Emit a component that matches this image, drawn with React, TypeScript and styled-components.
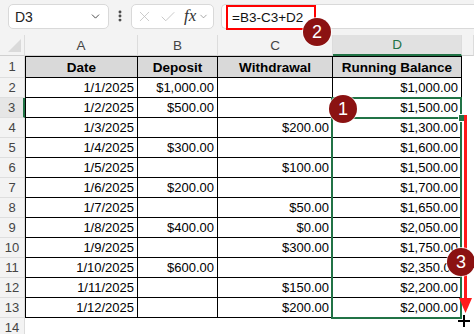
import { Fragment } from 'react';
import styled, { createGlobalStyle } from 'styled-components';
import { ChevronDown, X, Check, EllipsisVertical } from 'lucide-react';

const GlobalStyle = createGlobalStyle`
  html, body {
    margin: 0;
    padding: 0;
    background: #ffffff;
  }
  body {
    font-family: "Liberation Sans", Arial, sans-serif;
  }
`;

const Page = styled.div`
  position: relative;
  width: 474px;
  height: 334px;
  overflow: hidden;
  background: #ffffff;
`;

const Toolbar = styled.div`
  height: 35px;
  box-sizing: border-box;
  background: #f3f3f3;
  display: flex;
  align-items: flex-start;
  padding: 4px 0 0 8px;
`;

const Box = styled.div<{ $width?: number }>`
  height: 25px;
  box-sizing: border-box;
  background: #ffffff;
  border: 1px solid #d9d9d9;
  border-radius: 5px;
  display: flex;
  align-items: center;
  width: ${(p) => (p.$width ? `${p.$width}px` : 'auto')};
  flex: ${(p) => (p.$width ? 'none' : '1')};
`;

const NameBox = styled(Box)`
  justify-content: space-between;
  padding: 0 6px 0 6px;
  font-size: 14px;
  color: #222;
`;

const Dots = styled.div`
  width: 22px;
  display: flex;
  justify-content: center;
  padding-top: 5px;
  color: #444;
`;

const FxBox = styled(Box)`
  padding: 0 0 0 4px;
  color: #bdbdbd;
`;

const Fx = styled.span`
  font-family: "Liberation Serif", "Times New Roman", serif;
  font-style: italic;
  font-size: 17px;
  color: #333;
  margin: 0 2px 2px 7px;
`;

const FormulaBox = styled(Box)`
  margin-left: 7px;
  margin-right: -6px;
  align-items: flex-start;
  border-right: none;
  border-radius: 5px 0 0 5px;
`;

const Highlight = styled.div`
  box-sizing: border-box;
  width: 90px;
  height: 25px;
  margin-left: 4px;
  border: 2px solid #ff0000;
  display: flex;
  align-items: center;
  padding-left: 4px;
  font-size: 13.5px;
  color: #111;
`;

const Sheet = styled.div`
  display: grid;
  grid-template-columns: 25px 113px 80px 115px 129px 1fr;
  grid-template-rows: 21px 22px repeat(12, 20px) 1fr;
  height: 299px;
  font-size: 13px;
`;

const Corner = styled.div`
  position: relative;
  background: #f3f3f3;
  border-right: 1px solid #dcdcdc;
  border-bottom: 1px solid #d0d0d0;
  &::after {
    content: '';
    position: absolute;
    right: 3px;
    bottom: 3px;
    border-style: solid;
    border-width: 0 0 13px 13px;
    border-color: transparent transparent #dadada transparent;
  }
`;

const ColHead = styled.div<{ $selected?: boolean }>`
  box-sizing: border-box;
  background: ${(p) => (p.$selected ? '#e1e1e1' : '#f3f3f3')};
  color: ${(p) => (p.$selected ? '#217346' : '#444')};
  border-right: 1px solid #dcdcdc;
  border-bottom: ${(p) => (p.$selected ? '2px solid #217346' : '1px solid #d0d0d0')};
  display: flex;
  align-items: center;
  justify-content: center;
  font-size: 13.5px;
`;

const RowHead = styled.div<{ $selected?: boolean; $last?: boolean }>`
  box-sizing: border-box;
  background: ${(p) => (p.$selected ? '#e6e6e6' : '#f3f3f3')};
  color: #444;
  border-right: ${(p) => (p.$selected ? '2px solid #217346' : '1px solid #dcdcdc')};
  border-bottom: ${(p) => (p.$last ? 'none' : '1px solid #dedede')};
  display: flex;
  align-items: ${(p) => (p.$last ? 'flex-start' : 'center')};
  padding-top: ${(p) => (p.$last ? '2px' : '0')};
  justify-content: center;
  font-size: 13px;
`;

const Cell = styled.div<{ $first?: boolean; $top?: boolean; $head?: boolean }>`
  box-sizing: border-box;
  border-right: 1px solid #000;
  border-bottom: 1px solid #000;
  border-left: ${(p) => (p.$first ? '1px solid #000' : 'none')};
  border-top: ${(p) => (p.$top ? '1px solid #000' : 'none')};
  background: ${(p) => (p.$head ? '#d9d9d9' : '#fff')};
  font-weight: ${(p) => (p.$head ? 700 : 400)};
  font-size: ${(p) => (p.$head ? '13.5px' : '13px')};
  display: flex;
  align-items: center;
  justify-content: ${(p) => (p.$head ? 'center' : 'flex-end')};
  padding-right: ${(p) => (p.$head ? '0' : '3px')};
  color: #000;
  white-space: nowrap;
`;

const Blank = styled.div`
  background: #fff;
`;

const RangeBox = styled.div<{ $h: number }>`
  position: absolute;
  left: 331px;
  top: 97px;
  width: 131px;
  height: ${(p) => p.$h}px;
  box-sizing: border-box;
  border: 2px solid #217346;
  pointer-events: none;
`;

const Handle = styled.div`
  position: absolute;
  left: 458px;
  top: 114px;
  width: 6px;
  height: 6px;
  background: #217346;
  border: 1px solid #fff;
`;

const Badge = styled.div<{ $x: number; $y: number }>`
  position: absolute;
  left: ${(p) => p.$x - 14}px;
  top: ${(p) => p.$y - 14}px;
  width: 28px;
  height: 28px;
  border-radius: 50%;
  background: #8b1212;
  box-shadow: 0 0 0 1px rgba(255, 255, 255, 0.7);
  color: #fff;
  font-size: 18px;
  display: flex;
  align-items: center;
  justify-content: center;
`;

const Overlay = styled.svg`
  position: absolute;
  overflow: visible;
`;

type Row = [string, string, string, string];

const rows: Row[] = [
  ['1/1/2025', '$1,000.00', '', '$1,000.00'],
  ['1/2/2025', '$500.00', '', '$1,500.00'],
  ['1/3/2025', '', '$200.00', '$1,300.00'],
  ['1/4/2025', '$300.00', '', '$1,600.00'],
  ['1/5/2025', '', '$100.00', '$1,500.00'],
  ['1/6/2025', '$200.00', '', '$1,700.00'],
  ['1/7/2025', '', '$50.00', '$1,650.00'],
  ['1/8/2025', '$400.00', '$0.00', '$2,050.00'],
  ['1/9/2025', '', '$300.00', '$1,750.00'],
  ['1/10/2025', '$600.00', '', '$2,350.00'],
  ['1/11/2025', '', '$150.00', '$2,200.00'],
  ['1/12/2025', '', '$200.00', '$2,000.00'],
];

export default function App() {
  return (
    <Page>
      <GlobalStyle />
      <Toolbar>
        <NameBox $width={101}>
          <span>D3</span>
          <ChevronDown size={13} strokeWidth={1.6} color="#333" />
        </NameBox>
        <Dots>
          <EllipsisVertical size={14} strokeWidth={3} />
        </Dots>
        <FxBox $width={83}>
          <X size={17} strokeWidth={1.1} />
          <Check size={18} strokeWidth={1.1} style={{ marginLeft: 6 }} />
          <Fx>fx</Fx>
          <ChevronDown size={11} strokeWidth={1.4} color="#777" />
        </FxBox>
        <FormulaBox>
          <Highlight>=B3-C3+D2</Highlight>
        </FormulaBox>
      </Toolbar>

      <Sheet>
        <Corner />
        <ColHead>A</ColHead>
        <ColHead>B</ColHead>
        <ColHead>C</ColHead>
        <ColHead $selected>D</ColHead>
        <ColHead />

        <RowHead>1</RowHead>
        <Cell $first $top $head>Date</Cell>
        <Cell $top $head>Deposit</Cell>
        <Cell $top $head>Withdrawal</Cell>
        <Cell $top $head>Running Balance</Cell>
        <Blank />

        {rows.map((r, i) => (
          <Fragment key={i}>
            <RowHead $selected={i === 1}>{i + 2}</RowHead>
            <Cell $first>{r[0]}</Cell>
            <Cell>{r[1]}</Cell>
            <Cell>{r[2]}</Cell>
            <Cell>{r[3]}</Cell>
            <Blank />
          </Fragment>
        ))}

        <RowHead $last>14</RowHead>
      </Sheet>

      <RangeBox $h={222} />
      <RangeBox $h={22} />
      <Handle />

      <Overlay width="16" height="202" style={{ left: 457, top: 113 }}>
        <line x1="8.5" y1="2" x2="8.5" y2="188" stroke="#ff1a1a" strokeWidth="3" />
        <polygon points="2,185 15,185 8.5,200" fill="#ff1a1a" />
      </Overlay>

      <Overlay width="14" height="14" style={{ left: 457, top: 314 }}>
        <line x1="7" y1="1" x2="7" y2="13" stroke="#fff" strokeWidth="4" />
        <line x1="1" y1="7" x2="13" y2="7" stroke="#fff" strokeWidth="4" />
        <line x1="7" y1="1" x2="7" y2="13" stroke="#000" strokeWidth="2" />
        <line x1="1" y1="7" x2="13" y2="7" stroke="#000" strokeWidth="2" />
      </Overlay>

      <Badge $x={343} $y={109}>1</Badge>
      <Badge $x={317} $y={32}>2</Badge>
      <Badge $x={461} $y={262}>3</Badge>
    </Page>
  );
}
